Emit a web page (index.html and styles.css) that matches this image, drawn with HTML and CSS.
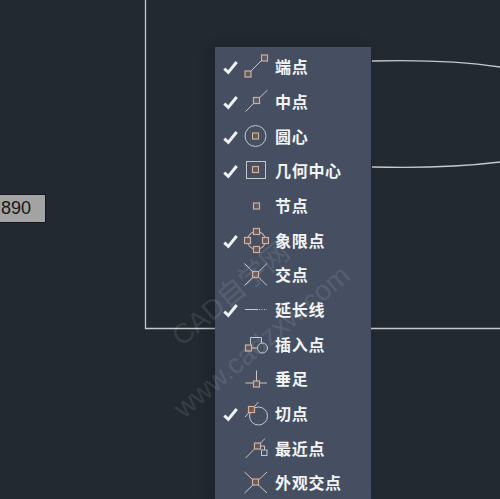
FILE: index.html
```html
<!DOCTYPE html>
<html lang="zh-CN">
<head>
  <meta charset="UTF-8" />
  <meta name="viewport" content="width=device-width, initial-scale=1.0" />
  <title>对象捕捉</title>
  <link rel="stylesheet" href="styles.css">
</head>
<body>
  <div class="canvas">
    <svg class="drawing" width="500" height="499" viewBox="0 0 500 499">
      <path d="M145.5 0V328.5H500" />
      <path d="M372 61C410 60 460 61 500 67" />
      <path d="M372 167C410 168 460 167 500 162" />
    </svg>

    <div class="dim-input">890</div>

    <ul class="snap-menu">
      <li class="snap-row">
        <svg class="check" viewBox="0 0 16 16"><path d="M1.300 9.700l4 3.700 8.400-10.400" /></svg>
        <svg class="icon" viewBox="0 0 34 34">
          <path class="ln" d="M11 22L23 10" />
          <rect class="sq" x="6" y="21" width="6" height="6" />
          <rect class="sq" x="22.500" y="5" width="6" height="6" />
        </svg>
        <span class="label">端点</span>
      </li>
      <li class="snap-row">
        <svg class="check" viewBox="0 0 16 16"><path d="M1.300 9.700l4 3.700 8.400-10.400" /></svg>
        <svg class="icon" viewBox="0 0 34 34">
          <path class="ln" d="M6.500 26.500L28.500 5" />
          <rect class="sq" x="14.500" y="12.500" width="6" height="6" />
        </svg>
        <span class="label">中点</span>
      </li>
      <li class="snap-row">
        <svg class="check" viewBox="0 0 16 16"><path d="M1.300 9.700l4 3.700 8.400-10.400" /></svg>
        <svg class="icon" viewBox="0 0 34 34">
          <circle class="ln" cx="16.500" cy="16" r="10.500" />
          <rect class="sq" x="13.500" y="13" width="6" height="6" />
        </svg>
        <span class="label">圆心</span>
      </li>
      <li class="snap-row">
        <svg class="check" viewBox="0 0 16 16"><path d="M1.300 9.700l4 3.700 8.400-10.400" /></svg>
        <svg class="icon" viewBox="0 0 34 34">
          <rect class="ln" x="7.500" y="7.500" width="19" height="17" />
          <rect class="sq" x="13.500" y="12.500" width="6" height="6" />
        </svg>
        <span class="label">几何中心</span>
      </li>
      <li class="snap-row">
        <span class="check"></span>
        <svg class="icon" viewBox="0 0 34 34">
          <rect class="sq" x="14.500" y="14" width="6" height="6" />
        </svg>
        <span class="label">节点</span>
      </li>
      <li class="snap-row">
        <svg class="check" viewBox="0 0 16 16"><path d="M1.300 9.700l4 3.700 8.400-10.400" /></svg>
        <svg class="icon" viewBox="0 0 34 34">
          <circle class="ln tan" cx="17.500" cy="16.500" r="9" />
          <rect class="sq" x="14.500" y="4.500" width="6" height="6" />
          <rect class="sq" x="5.500" y="13.500" width="6" height="6" />
          <rect class="sq" x="23.500" y="13.500" width="6" height="6" />
          <rect class="sq" x="14.500" y="22.500" width="6" height="6" />
        </svg>
        <span class="label">象限点</span>
      </li>
      <li class="snap-row">
        <span class="check"></span>
        <svg class="icon" viewBox="0 0 34 34">
          <path class="ln" d="M5.500 5.500L28 27.500M28 5.500L5.500 27.500" />
          <rect class="sq" x="13.500" y="13.500" width="6" height="6" />
        </svg>
        <span class="label">交点</span>
      </li>
      <li class="snap-row">
        <svg class="check" viewBox="0 0 16 16"><path d="M1.300 9.700l4 3.700 8.400-10.400" /></svg>
        <svg class="icon" viewBox="0 0 34 34">
          <path class="ln" d="M6 16.500H19" />
          <path class="ln dots" d="M20 16.500H28" />
        </svg>
        <span class="label">延长线</span>
      </li>
      <li class="snap-row">
        <span class="check"></span>
        <svg class="icon" viewBox="0 0 34 34">
          <path class="ln" d="M11.500 17V9.500H22.500V15" />
          <circle class="ln" cx="23.500" cy="20" r="5" />
          <path class="ln tan" d="M12 20H18" />
          <rect class="sq" x="6.500" y="17" width="6" height="6" />
        </svg>
        <span class="label">插入点</span>
      </li>
      <li class="snap-row">
        <span class="check"></span>
        <svg class="icon" viewBox="0 0 34 34">
          <path class="ln" d="M17.500 8.500V19M6.500 21H28" />
          <rect class="sq" x="14.500" y="19" width="6" height="6" />
        </svg>
        <span class="label">垂足</span>
      </li>
      <li class="snap-row">
        <svg class="check" viewBox="0 0 16 16"><path d="M1.300 9.700l4 3.700 8.400-10.400" /></svg>
        <svg class="icon" viewBox="0 0 34 34">
          <circle class="ln" cx="19.500" cy="19" r="9" />
          <path class="ln" d="M6 20L19.500 5" />
          <rect class="sq dark" x="9.500" y="9.500" width="6" height="6" />
        </svg>
        <span class="label">切点</span>
      </li>
      <li class="snap-row">
        <span class="check"></span>
        <svg class="icon" viewBox="0 0 34 34">
          <path class="ln" d="M6.500 26L26 6.500M21 14H25.500V18" />
          <rect class="sq" x="15.500" y="11" width="6" height="6" />
          <rect class="ln" x="22.500" y="18" width="5.500" height="5.500" />
        </svg>
        <span class="label">最近点</span>
      </li>
      <li class="snap-row">
        <span class="check"></span>
        <svg class="icon" viewBox="0 0 34 34">
          <path class="ln" d="M5.500 6L28 27M28 6L5.500 27" />
          <rect class="sq dark" x="13.500" y="13" width="6" height="6" />
        </svg>
        <span class="label">外观交点</span>
      </li>
    </ul>

    <div class="watermark wm-name">CAD自学网</div>
    <div class="watermark wm-url">www.cadzxw.com</div>
  </div>
</body>
</html>
```

FILE: styles.css
```css
body {
  margin: 0;
  background: #222931;
  font-family: "Noto Sans CJK SC", "Liberation Sans", sans-serif;
}
.canvas {
  position: relative;
  width: 500px;
  height: 499px;
  overflow: hidden;
}
.drawing {
  position: absolute;
  left: 0;
  top: 0;
}
.drawing path {
  fill: none;
  stroke: #c6cacd;
  stroke-width: 1.3;
}
.dim-input {
  position: absolute;
  left: -2px;
  top: 194px;
  width: 48px;
  height: 29px;
  padding-left: 2px;
  box-sizing: border-box;
  background: #a3a3a3;
  border: 1px solid #15181c;
  color: #14171a;
  font-family: "Liberation Sans", sans-serif;
  font-size: 18px;
  line-height: 27px;
}
.snap-menu {
  position: absolute;
  left: 215px;
  top: 47px;
  width: 156px;
  height: 452px;
  margin: 0;
  padding: 3px 0 0;
  box-sizing: border-box;
  list-style: none;
  background: #454f61;
  box-shadow: -6px 0 10px rgba(18, 22, 27, 0.25);
}
.snap-row {
  display: flex;
  align-items: center;
  height: 34.67px;
  padding-left: 8px;
}
.check {
  flex: none;
  width: 16px;
  height: 16px;
  fill: none;
  stroke: #eef0f2;
  stroke-width: 3;
}
.icon {
  flex: none;
  width: 34px;
  height: 34px;
  margin-right: 2px;
}
.ln {
  fill: none;
  stroke: #c3c8ce;
  stroke-width: 1;
}
.tan {
  stroke: #cdaa97;
  stroke-width: 1.3;
}
.dots {
  stroke-dasharray: 1 1.500;
}
.sq {
  fill: #5d5a60;
  stroke: #d2ad99;
  stroke-width: 1.2;
}
.sq.dark {
  fill: #6b5a52;
}
.label {
  padding-bottom: 2px;
  color: #f2f4f6;
  font-size: 16px;
  font-weight: 700;
  letter-spacing: 0.7px;
  white-space: nowrap;
}
.watermark {
  position: absolute;
  color: rgba(255, 255, 255, 0.11);
  font-family: "Liberation Sans", "Noto Sans CJK SC", sans-serif;
  font-size: 28px;
  line-height: 1;
  white-space: nowrap;
  transform: rotate(-40deg);
  transform-origin: left bottom;
}
.wm-name {
  left: 185px;
  top: 323px;
}
.wm-url {
  left: 187px;
  top: 395px;
}
```
